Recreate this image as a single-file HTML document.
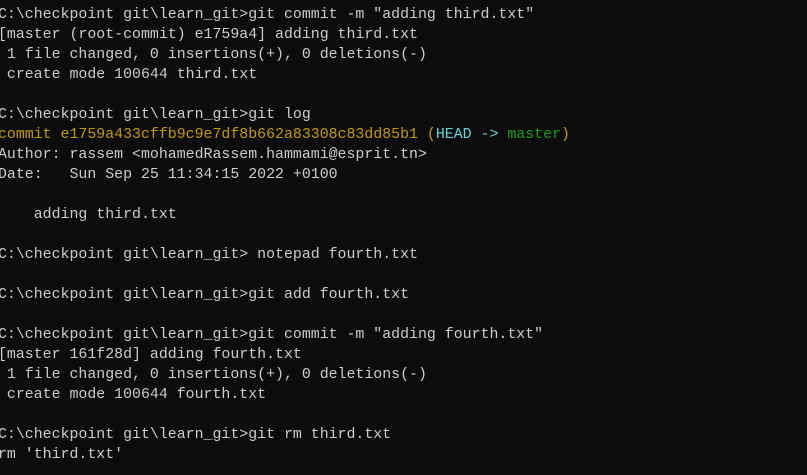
<!DOCTYPE html>
<html><head><style>
html,body{margin:0;padding:0;background:#0c0c0c;width:807px;height:475px;overflow:hidden}
pre{margin:0;position:absolute;left:-2px;top:5px;font-family:"Liberation Mono",monospace;font-size:14.9px;line-height:20px;color:#cccccc}
.y{color:#c19c00}.c{color:#61d6d6}.g{color:#13a10e}
</style></head><body><pre>C:\checkpoint git\learn_git&gt;git commit -m "adding third.txt"
[master (root-commit) e1759a4] adding third.txt
 1 file changed, 0 insertions(+), 0 deletions(-)
 create mode 100644 third.txt

C:\checkpoint git\learn_git&gt;git log
<span class="y">commit e1759a433cffb9c9e7df8b662a83308c83dd85b1 (</span><span class="c">HEAD -&gt; </span><span class="g">master</span><span class="y">)</span>
Author: rassem &lt;mohamedRassem.hammami@esprit.tn&gt;
Date:   Sun Sep 25 11:34:15 2022 +0100

    adding third.txt

C:\checkpoint git\learn_git&gt; notepad fourth.txt

C:\checkpoint git\learn_git&gt;git add fourth.txt

C:\checkpoint git\learn_git&gt;git commit -m "adding fourth.txt"
[master 161f28d] adding fourth.txt
 1 file changed, 0 insertions(+), 0 deletions(-)
 create mode 100644 fourth.txt

C:\checkpoint git\learn_git&gt;git rm third.txt
rm 'third.txt'</pre></body></html>
